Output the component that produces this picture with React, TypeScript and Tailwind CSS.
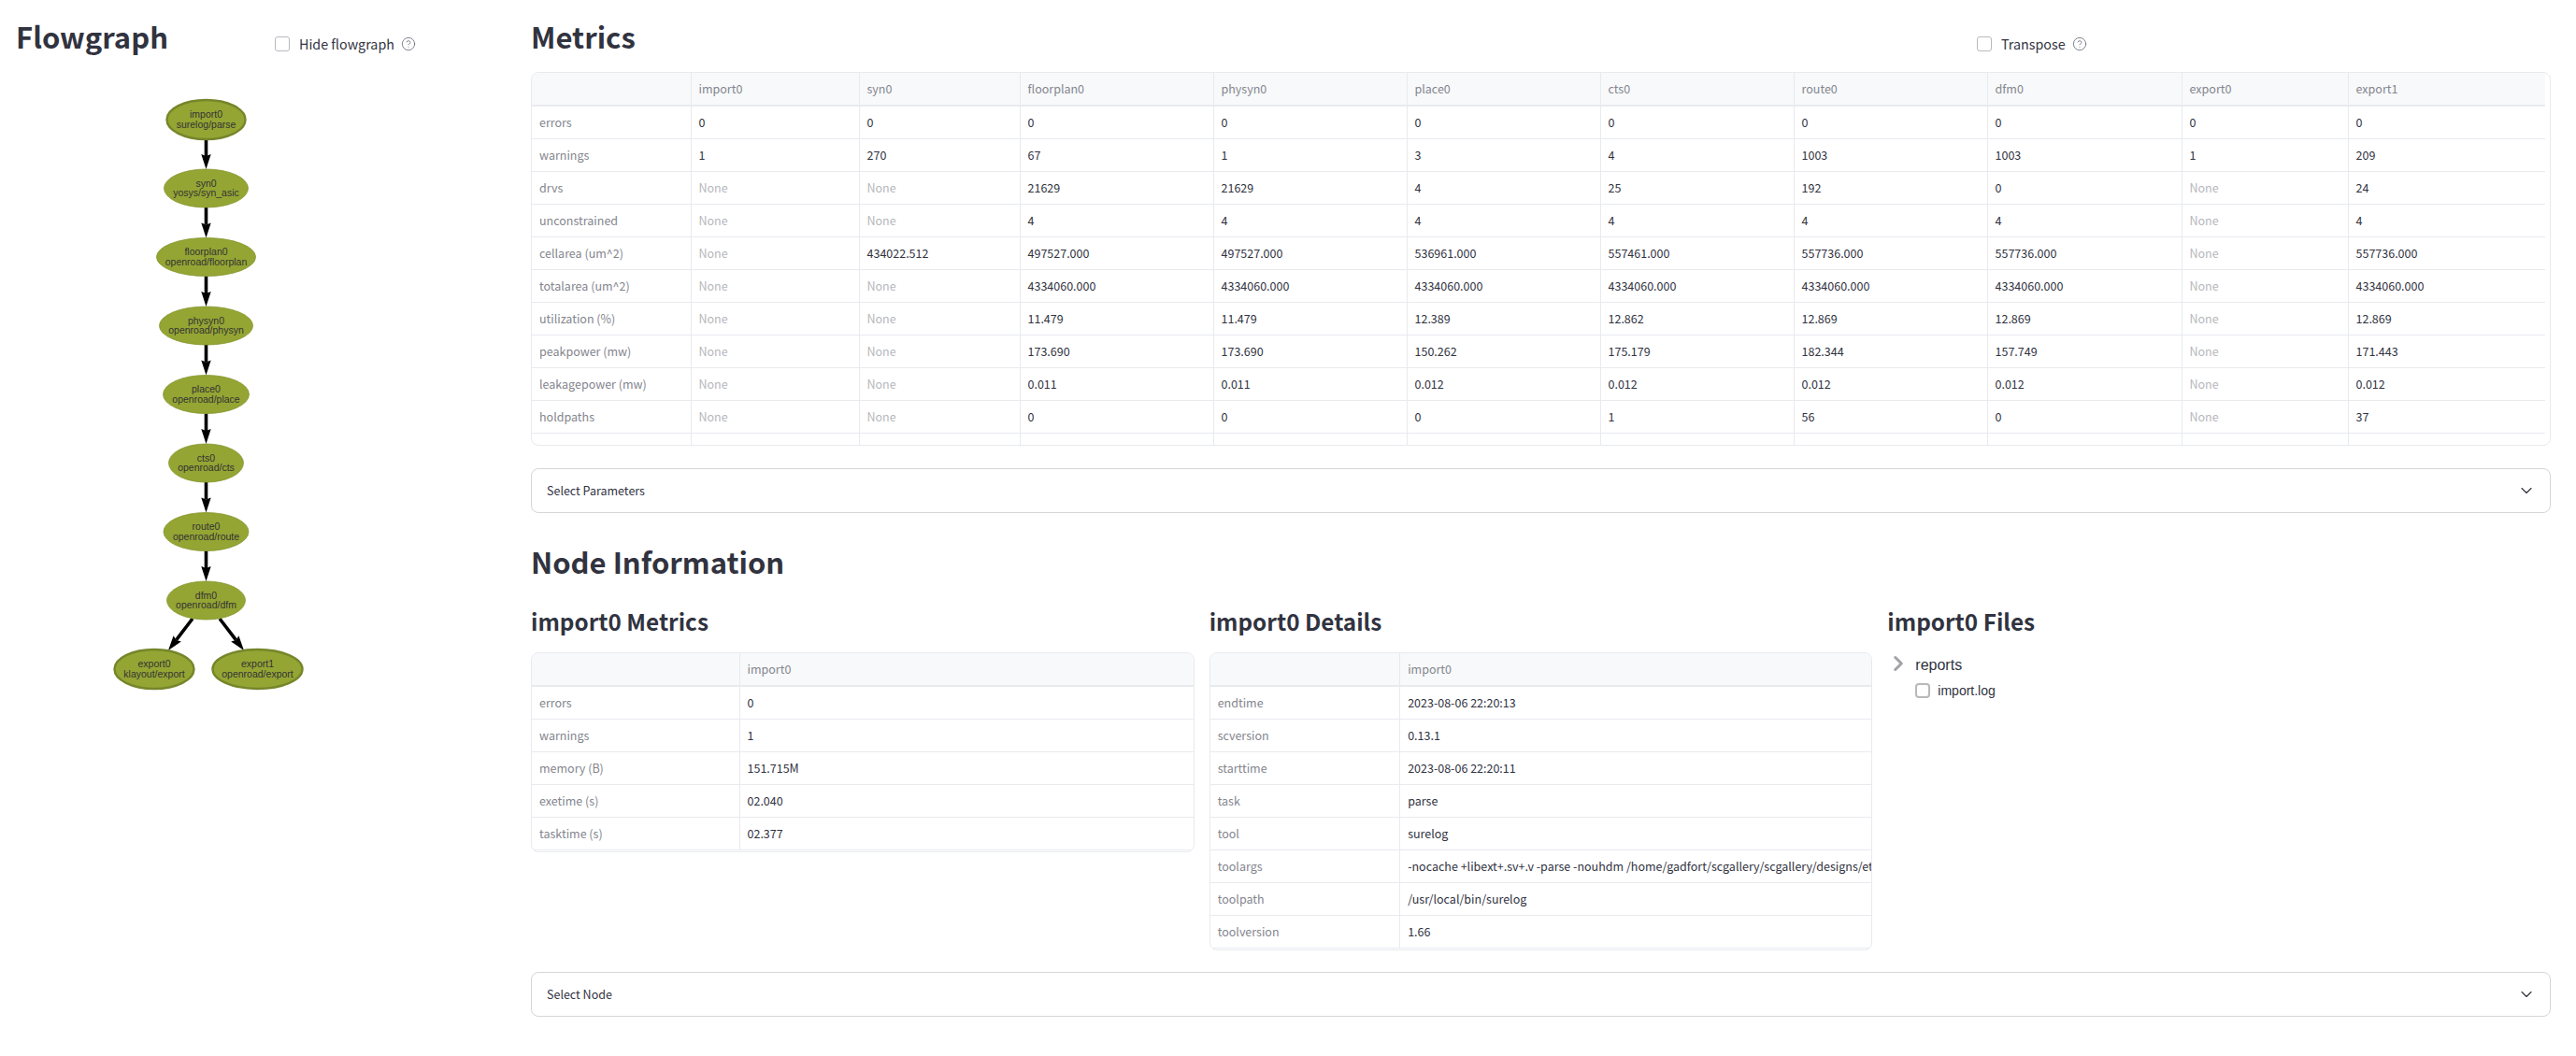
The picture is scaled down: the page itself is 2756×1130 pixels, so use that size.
import { ChevronDown, ChevronRight, CircleHelp } from "lucide-react"

const sans = "font-['Noto_Sans_CJK_SC','Source_Sans_Pro',sans-serif]"

const nodes = [
  { name: "import0", task: "surelog/parse", cx: 220.5, cy: 128, rx: 42, ry: 21, thick: true },
  { name: "syn0", task: "yosys/syn_asic", cx: 220.5, cy: 201.5, rx: 45, ry: 20.5 },
  { name: "floorplan0", task: "openroad/floorplan", cx: 220.5, cy: 275, rx: 53, ry: 20.5 },
  { name: "physyn0", task: "openroad/physyn", cx: 220.5, cy: 348.5, rx: 50, ry: 20.5 },
  { name: "place0", task: "openroad/place", cx: 220.5, cy: 422, rx: 46, ry: 20.5 },
  { name: "cts0", task: "openroad/cts", cx: 220.5, cy: 495.5, rx: 40, ry: 20.5 },
  { name: "route0", task: "openroad/route", cx: 220.5, cy: 569, rx: 45.5, ry: 20.5 },
  { name: "dfm0", task: "openroad/dfm", cx: 220.5, cy: 642.5, rx: 42, ry: 20.5 },
  { name: "export0", task: "klayout/export", cx: 165, cy: 716, rx: 42.5, ry: 21, thick: true },
  { name: "export1", task: "openroad/export", cx: 275.5, cy: 716, rx: 48, ry: 21, thick: true },
]

// start and tip of each edge
const edges = [
  [220.5, 149, 220.5, 181],
  [220.5, 222, 220.5, 254.5],
  [220.5, 295.5, 220.5, 328],
  [220.5, 369, 220.5, 401.5],
  [220.5, 442.5, 220.5, 475],
  [220.5, 516, 220.5, 548.5],
  [220.5, 589.5, 220.5, 622],
  [206, 662, 180, 696],
  [235, 662, 261, 696],
]

const Edge = ({ e }: { e: number[] }) => {
  const [x1, y1, x2, y2] = e
  const len = Math.hypot(x2 - x1, y2 - y1)
  const ux = (x2 - x1) / len
  const uy = (y2 - y1) / len
  const bx = x2 - ux * 16
  const by = y2 - uy * 16
  const nx = bx + ux * 2
  const ny = by + uy * 2
  const head = `${x2},${y2} ${bx - uy * 5.2},${by + ux * 5.2} ${nx},${ny} ${bx + uy * 5.2},${by - ux * 5.2}`
  return (
    <g>
      <line x1={x1} y1={y1} x2={nx} y2={ny} stroke="#000" strokeWidth="3.6" />
      <polygon points={head} fill="#000" />
    </g>
  )
}

const Flowgraph = () => (
  <svg width="551" height="800" viewBox="17 0 551 800" className="block">
    {edges.map((e, i) => (
      <Edge key={i} e={e} />
    ))}
    {nodes.map((n) => (
      <g key={n.name}>
        <ellipse
          cx={n.cx}
          cy={n.cy}
          rx={n.rx}
          ry={n.ry}
          fill="#94a534"
          stroke={n.thick ? "#75862a" : "#84962c"}
          strokeWidth={n.thick ? 2.4 : 0.8}
        />
        <text
          x={n.cx}
          y={n.cy - 1.8}
          textAnchor="middle"
          fontFamily="'Liberation Sans', Arial, sans-serif"
          fontSize="10.5"
          fill="#333"
        >
          {n.name}
        </text>
        <text
          x={n.cx}
          y={n.cy + 8.8}
          textAnchor="middle"
          fontFamily="'Liberation Sans', Arial, sans-serif"
          fontSize="10.5"
          fill="#333"
        >
          {n.task}
        </text>
      </g>
    ))}
  </svg>
)

const Checkbox = ({ label }: { label: string }) => (
  <div className="flex items-center h-[16px]">
    <span className="w-[16px] h-[16px] rounded-[3px] border border-[#b9bac0] bg-white" />
    <span className="ml-[10px] text-[14.3px] leading-[16px] text-[#31333f]">{label}</span>
    <CircleHelp className="ml-[7px] text-[#777985]" size={16} strokeWidth={1.4} />
  </div>
)

type TableProps = {
  width: string
  cols: string[]
  head: string[]
  rows: string[][]
}

const DataTable = ({ width, cols, head, rows }: TableProps) => (
  <table className={`table-fixed border-collapse text-[12.5px] leading-[16px] ${width}`}>
    <colgroup>
      {cols.map((w, i) => (
        <col key={i} className={w} />
      ))}
    </colgroup>
    <thead>
      <tr className="h-[35px] bg-[#f8f9fb]">
        {head.map((h, i) => (
          <th
            key={i}
            className="px-[8px] text-left font-normal text-[#84868e] border-r border-b-2 border-[#e8eaee] last:border-r-0 whitespace-nowrap overflow-hidden"
          >
            {h}
          </th>
        ))}
      </tr>
    </thead>
    <tbody>
      {rows.map((r) => (
        <tr key={r[0]} className="h-[35px]">
          {r.map((c, i) => (
            <td
              key={i}
              className={`px-[8px] border-r border-b border-[#e8eaee] last:border-r-0 whitespace-nowrap overflow-hidden ${
                i === 0 ? "text-[#84868e]" : c === "None" ? "text-[#b6b7bb]" : "text-[#31333f]"
              }`}
            >
              {c}
            </td>
          ))}
        </tr>
      ))}
    </tbody>
  </table>
)

const metricCols = [
  "w-[170px]",
  "w-[180px]",
  "w-[172px]",
  "w-[207px]",
  "w-[207px]",
  "w-[207px]",
  "w-[207px]",
  "w-[207px]",
  "w-[208px]",
  "w-[178px]",
  "w-[211px]",
]

const N = "None"
const area = "4334060.000"

const metricRows = [
  ["errors", "0", "0", "0", "0", "0", "0", "0", "0", "0", "0"],
  ["warnings", "1", "270", "67", "1", "3", "4", "1003", "1003", "1", "209"],
  ["drvs", N, N, "21629", "21629", "4", "25", "192", "0", N, "24"],
  ["unconstrained", N, N, "4", "4", "4", "4", "4", "4", N, "4"],
  ["cellarea (um^2)", N, "434022.512", "497527.000", "497527.000", "536961.000", "557461.000", "557736.000", "557736.000", N, "557736.000"],
  ["totalarea (um^2)", N, N, area, area, area, area, area, area, N, area],
  ["utilization (%)", N, N, "11.479", "11.479", "12.389", "12.862", "12.869", "12.869", N, "12.869"],
  ["peakpower (mw)", N, N, "173.690", "173.690", "150.262", "175.179", "182.344", "157.749", N, "171.443"],
  ["leakagepower (mw)", N, N, "0.011", "0.011", "0.012", "0.012", "0.012", "0.012", N, "0.012"],
  ["holdpaths", N, N, "0", "0", "0", "1", "56", "0", N, "37"],
  ["setuppaths", N, N, "0", "0", "0", "0", "0", "0", N, "0"],
]

const nodeMetricRows = [
  ["errors", "0"],
  ["warnings", "1"],
  ["memory (B)", "151.715M"],
  ["exetime (s)", "02.040"],
  ["tasktime (s)", "02.377"],
]

const nodeDetailRows = [
  ["endtime", "2023-08-06 22:20:13"],
  ["scversion", "0.13.1"],
  ["starttime", "2023-08-06 22:20:11"],
  ["task", "parse"],
  ["tool", "surelog"],
  ["toolargs", "-nocache +libext+.sv+.v -parse -nouhdm /home/gadfort/scgallery/scgallery/designs/ethmac/src/ethmac.v"],
  ["toolpath", "/usr/local/bin/surelog"],
  ["toolversion", "1.66"],
]

const Expander = ({ label }: { label: string }) => (
  <div className="h-[48px] flex items-center justify-between pl-[16px] pr-[15px] rounded-[8px] border border-[#d5d6d9]">
    <span className="text-[12.5px] leading-[16px] text-[#31333f]">{label}</span>
    <ChevronDown className="text-[#31333f]" size={20} strokeWidth={1.4} />
  </div>
)

export default function App() {
  return (
    <div className={`flex h-[1130px] w-full overflow-hidden bg-white pl-[17px] pr-[27px] ${sans}`}>
      <div className="w-[551px] shrink-0">
        <div className="flex h-[77px]">
          <h1 className="w-[277px] mt-[16px] text-[31px] leading-[46px] font-semibold text-[#31333f]">Flowgraph</h1>
          <div className="pt-[39px]">
            <Checkbox label="Hide flowgraph" />
          </div>
        </div>
        <div className="-mt-[77px] pointer-events-none">
          <Flowgraph />
        </div>
      </div>

      <div className="flex-1 min-w-0">
        <div className="flex h-[77px]">
          <h2 className="flex-1 mt-[16px] text-[31px] leading-[46px] font-semibold text-[#31333f]">Metrics</h2>
          <div className="w-[614px] pt-[39px]">
            <Checkbox label="Transpose" />
          </div>
        </div>

        <div className="h-[400px] rounded-[8px] border border-[#e8eaee] overflow-hidden">
          <DataTable
            width="w-[2154px]"
            cols={metricCols}
            head={["", "import0", "syn0", "floorplan0", "physyn0", "place0", "cts0", "route0", "dfm0", "export0", "export1"]}
            rows={metricRows}
          />
        </div>

        <div className="mt-[24px]">
          <Expander label="Select Parameters" />
        </div>

        <h2 className="mt-[29px] h-[46px] text-[31px] leading-[46px] font-semibold text-[#31333f]">Node Information</h2>

        <div className="grid grid-cols-3 gap-4 mt-[23px] h-[393px]">
          <div>
            <h3 className="h-[35px] mb-[16px] text-[24.3px] leading-[35px] font-semibold text-[#31333f]">import0 Metrics</h3>
            <div className="rounded-[8px] border border-[#e8eaee] overflow-hidden pb-[1px]">
              <DataTable width="w-[708px]" cols={["w-[222px]", "w-[486px]"]} head={["", "import0"]} rows={nodeMetricRows} />
            </div>
          </div>
          <div>
            <h3 className="h-[35px] mb-[16px] text-[24.3px] leading-[35px] font-semibold text-[#31333f]">import0 Details</h3>
            <div className="rounded-[8px] border border-[#e8eaee] overflow-hidden pb-[1px]">
              <DataTable width="w-[708px]" cols={["w-[203px]", "w-[505px]"]} head={["", "import0"]} rows={nodeDetailRows} />
            </div>
          </div>
          <div>
            <h3 className="h-[35px] mb-[16px] text-[24.3px] leading-[35px] font-semibold text-[#31333f]">import0 Files</h3>
            <div className="flex items-start h-[28px] text-[16px] leading-[28px] text-[#31333f] font-['Liberation_Sans',sans-serif]">
              <ChevronRight className="-ml-[1px] -mt-[1.5px] shrink-0 text-[#a3a3a7]" size={26} strokeWidth={2.8} />
              <span className="ml-[5px]">reports</span>
            </div>
            <div className="flex items-center h-[16px] mt-[5px] pl-[30px] text-[14px] leading-[16px] text-[#31333f] font-['Liberation_Sans',sans-serif]">
              <span className="w-[16px] h-[16px] rounded-[4px] border-2 border-[#b8b8bc] bg-white" />
              <span className="ml-[8px]">import.log</span>
            </div>
          </div>
        </div>

        <Expander label="Select Node" />
      </div>
    </div>
  )
}
